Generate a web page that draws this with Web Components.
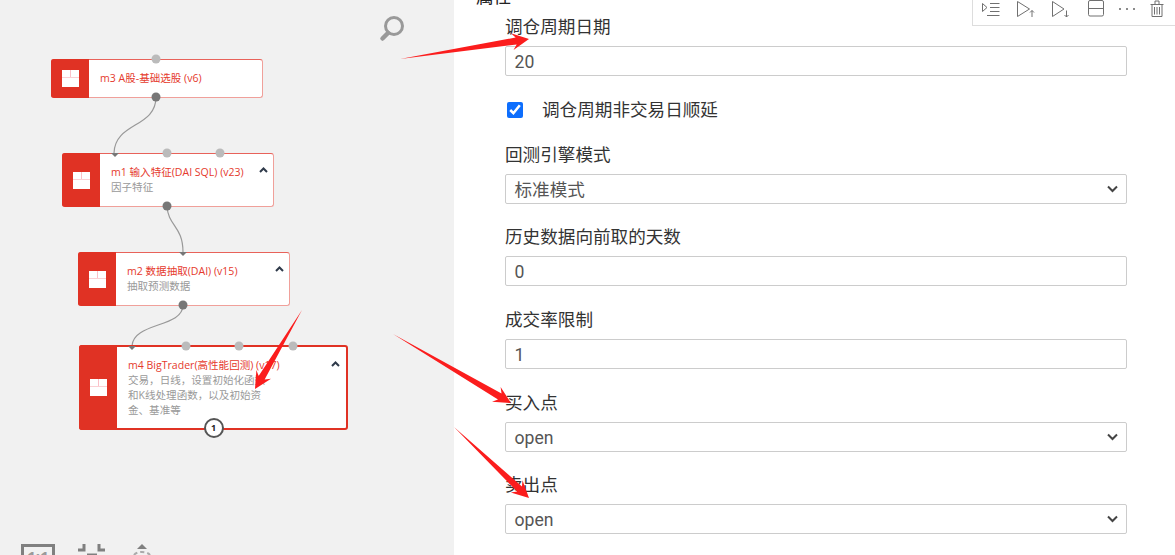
<!DOCTYPE html>
<html lang="zh">
<head>
<meta charset="utf-8">
<title>属性</title>
<style>
html, body { margin: 0; height: 100%; overflow: hidden; background: #fff; }
body { font-family: "Open Sans", "Noto Sans CJK SC", sans-serif; }
#page { display: grid; grid-template-columns: 454px 1fr; width: 1175px; height: 555px; overflow: hidden; position: relative; }
</style>
</head>
<body>
<div id="page">
  <flow-canvas>
    <flow-node style="left:51px;top:59px;width:212px;height:39px" name="m3 A股-基础选股 (v6)" ports="104" out="104"></flow-node>
    <flow-node style="left:62px;top:153px;width:212px;height:54px" name="m1 输入特征(DAI SQL) (v23)" desc="因子特征" ports="104,157" arrow="52" out="104" toggle></flow-node>
    <flow-node style="left:78px;top:252px;width:212px;height:54px" name="m2 数据抽取(DAI) (v15)" desc="抽取预测数据" arrow="104" out="104" toggle></flow-node>
    <flow-node style="left:79px;top:345px;width:269px;height:85px" name="m4 BigTrader(高性能回测) (v17)" desc="交易，日线，设置初始化函数和K线处理函数，以及初始资金、基准等" ports="105,158,212" arrow="51" badge="1" toggle selected></flow-node>
  </flow-canvas>
  <prop-panel>
    <h-title>属性</h-title>
    <form-field label="调仓周期日期"><text-box>20</text-box></form-field>
    <check-row>调仓周期非交易日顺延</check-row>
    <form-field label="回测引擎模式"><text-box select>标准模式</text-box></form-field>
    <form-field label="历史数据向前取的天数"><text-box>0</text-box></form-field>
    <form-field label="成交率限制"><text-box>1</text-box></form-field>
    <form-field label="买入点"><text-box select>open</text-box></form-field>
    <form-field label="卖出点"><text-box select>open</text-box></form-field>
  </prop-panel>
  <cell-toolbar></cell-toolbar>
  <red-arrows></red-arrows>
</div>

<script>
const canvasTemplate = document.createElement('template')
canvasTemplate.innerHTML = `
<style>
:host { display: block; position: relative; background: #f1f1f1; overflow: hidden; }
svg { position: absolute; left: 0; top: 0; }
#tools { position: absolute; left: 21px; top: 544px; display: flex; gap: 23px; align-items: flex-start; }
#one { width: 28px; height: 20px; border: 3px solid #808080; font: bold 15px/18px "Open Sans", sans-serif; color: #999; text-align: center; box-sizing: content-box; }
</style>
<svg width="454" height="555" fill="none">
  <path d="M156 97C156 128 115 122 114 153" stroke="#999" stroke-width="1.2"/>
  <path d="M167 206C168 226 183 226 183 252" stroke="#999" stroke-width="1.2"/>
  <path d="M183 305C183 328 133 322 132 346" stroke="#999" stroke-width="1.2"/>
  <circle cx="394" cy="26" r="8.5" stroke="#999" stroke-width="3"/>
  <path d="M388 33L382.5 38.5" stroke="#999" stroke-width="4.5" stroke-linecap="round"/>
</svg>
<slot></slot>
<div id="tools">
  <div id="one">1:1</div>
  <svg style="position:static" width="28" height="12" fill="none" stroke="#808080" stroke-width="3"><path d="M6 0V6H0M21 0V6H27"/><path d="M9 12H19" stroke-width="5"/></svg>
  <svg style="position:static;margin-left:2px" width="24" height="12" fill="none"><path d="M11 0L16 5H6Z" fill="#808080"/><path d="M3 11C6 7 16 7 19 11" stroke="#aaa" stroke-width="2" stroke-dasharray="4 3"/></svg>
</div>
`
class FlowCanvas extends HTMLElement {
  constructor () {
    super()
    this.attachShadow({ mode: 'open' })
    this.shadowRoot.appendChild(canvasTemplate.content.cloneNode(true))
  }
}
customElements.define('flow-canvas', FlowCanvas)

const nodeTemplate = document.createElement('template')
nodeTemplate.innerHTML = `
<style>
:host { position: absolute; display: flex; box-sizing: border-box; background: #fff; border: 1px solid #e8625a; border-bottom-color: #f0a09a; border-right-color: #f0a09a; border-radius: 3px; font-family: "Open Sans", "Noto Sans CJK SC", sans-serif; font-size: 10.56px; line-height: 15px; }
:host([selected]) { border: 2px solid #e03224; }
#side { flex: none; width: 38px; margin: -1px 0 -1px -1px; background: #e03224; border-radius: 3px 0 0 3px; display: flex; align-items: center; justify-content: center; }
:host([selected]) #side { margin: -2px 0 -2px -2px; }
#logo { width: 17px; height: 17px; background: #fff; position: relative; }
#logo::before { content: ""; position: absolute; left: 0; right: 0; top: 7px; height: 1px; background: #fbd0d4; }
#logo::after { content: ""; position: absolute; left: 8px; top: 0; height: 7px; width: 1px; background: #fbc0c8; }
#body { flex: 1; min-width: 0; padding: 0 11px; align-self: center; }
:host([selected]) #body { padding-right: 76px; }
#name { color: #e5392c; white-space: nowrap; }
#desc { color: #999; }
#desc:empty { display: none; }
#toggle { position: absolute; right: 5px; top: 13px; }
:host([selected]) #toggle { right: 6px; top: 14px; }
.port { position: absolute; width: 9px; height: 9px; border-radius: 50%; background: #bbb; transform: translate(-50%, -50%); top: -1px; }
.out { top: 100%; background: #777; }
.in { position: absolute; top: -1px; width: 0; height: 0; border: 4px solid transparent; border-top: 4px solid #777; border-bottom: 0; transform: translateX(-50%); }
#badge { position: absolute; left: 50%; bottom: -10px; margin-left: -10px; width: 20px; height: 20px; box-sizing: border-box; border: 2px solid #555; border-radius: 50%; background: #fff; color: #222; font: bold 9px/16px "Open Sans", sans-serif; text-align: center; }
</style>
<div id="side"><div id="logo"></div></div>
<div id="body"><div id="name"></div><div id="desc"></div></div>
`
class FlowNode extends HTMLElement {
  constructor () {
    super()
    this.attachShadow({ mode: 'open' })
    this.shadowRoot.appendChild(nodeTemplate.content.cloneNode(true))
  }

  /**
   * Builds the texts, ports and toggle from the attributes
   */
  connectedCallback () {
    const root = this.shadowRoot
    root.querySelector('#name').textContent = this.getAttribute('name')
    root.querySelector('#desc').textContent = this.getAttribute('desc') || ''
    const add = (className, left) => {
      const el = document.createElement('div')
      el.className = className
      el.style.left = left + 'px'
      root.appendChild(el)
    }
    const ports = this.getAttribute('ports')
    if (ports) ports.split(',').forEach((p) => add('port', p))
    if (this.hasAttribute('arrow')) add('in', this.getAttribute('arrow'))
    if (this.hasAttribute('out')) add('port out', this.getAttribute('out'))
    if (this.hasAttribute('toggle')) {
      const t = document.createElement('div')
      t.id = 'toggle'
      t.innerHTML = '<svg width="9" height="6" fill="none" stroke="#2f3a4a" stroke-width="2" style="display:block"><path d="M1 5L4.5 1.5L8 5"/></svg>'
      root.appendChild(t)
    }
    if (this.hasAttribute('badge')) {
      const b = document.createElement('div')
      b.id = 'badge'
      b.textContent = this.getAttribute('badge')
      root.appendChild(b)
    }
  }
}
customElements.define('flow-node', FlowNode)

class PropPanel extends HTMLElement {
  constructor () {
    super()
    this.attachShadow({ mode: 'open' }).innerHTML = `
<style>
:host { display: block; background: #fff; padding: 0 48px 0 51px; font: 17.6px/24px Roboto, "Noto Sans CJK SC", sans-serif; color: #333; }
</style>
<slot></slot>`
  }
}
customElements.define('prop-panel', PropPanel)

class HTitle extends HTMLElement {
  constructor () {
    super()
    this.attachShadow({ mode: 'open' }).innerHTML = `
<style>
:host { display: block; height: 24px; margin: -15px 0 6px -29px; color: #222; }
</style>
<slot></slot>`
  }
}
customElements.define('h-title', HTitle)

class FormField extends HTMLElement {
  constructor () {
    super()
    this.attachShadow({ mode: 'open' }).innerHTML = `
<style>
:host { display: block; margin-bottom: 21.67px; }
#label { height: 24px; margin-bottom: 7px; color: #333; }
</style>
<div id="label"></div>
<slot></slot>`
  }

  connectedCallback () {
    this.shadowRoot.querySelector('#label').textContent = this.getAttribute('label')
  }
}
customElements.define('form-field', FormField)

class TextBox extends HTMLElement {
  constructor () {
    super()
    this.attachShadow({ mode: 'open' }).innerHTML = `
<style>
:host { display: flex; align-items: center; justify-content: space-between; box-sizing: border-box; height: 30px; padding: 0 8px 0 8.5px; background: #fff; border: 1px solid #ccc; border-radius: 2px; color: #555; line-height: 28px; }
span { position: relative; top: 1px; }
svg { display: none; }
:host([select]) svg { display: block; }
</style>
<span><slot></slot></span>
<svg width="11" height="8" fill="none" stroke="#444" stroke-width="2"><path d="M1 1.5L5.5 6L10 1.5"/></svg>`
  }
}
customElements.define('text-box', TextBox)

class CheckRow extends HTMLElement {
  constructor () {
    super()
    this.attachShadow({ mode: 'open' }).innerHTML = `
<style>
:host { display: flex; align-items: center; height: 24px; margin-bottom: 21px; color: #333; }
input { width: 16px; height: 16px; margin: 0 19px 0 2px; accent-color: #0d6efd; }
</style>
<input type="checkbox" checked>
<span><slot></slot></span>`
  }
}
customElements.define('check-row', CheckRow)

class CellToolbar extends HTMLElement {
  constructor () {
    super()
    this.attachShadow({ mode: 'open' }).innerHTML = `
<style>
:host { position: absolute; left: 972px; top: -1px; width: 203px; height: 27px; box-sizing: border-box; background: #fff; border: 1px solid #ddd; border-right: 0; }
svg { display: block; }
</style>
<svg width="202" height="25" fill="none" stroke="#707070" stroke-width="1">
  <path d="M9.5 3.5L14 7.5L9.5 11.5Z"/>
  <path d="M17 3.5H26.5M17 7.5H26.5M17 11.5H26.5M14 15.5H26.5"/>
  <path d="M44.5 1.5L56.5 9L44.5 16.5Z"/>
  <path d="M59 17V10.5M57 12.5L59 10.5L61 12.5"/>
  <path d="M79.5 1.5L91 9L79.5 16.5Z"/>
  <path d="M93.5 10.5V17M91.5 15L93.5 17L95.5 15"/>
  <rect x="115.5" y="0.5" width="15" height="15.5" rx="1.5"/>
  <path d="M115.5 8.5H130.5"/>
  <path d="M146 9H148M153 9H155M160 9H162" stroke="#666" stroke-width="1.5"/>
  <path d="M177.5 4.5H190.5M179 4.5V16.5H189V4.5M182 4V1H186V4M181.5 7V14.5M184 7V14.5M186.5 7V14.5"/>
</svg>`
  }
}
customElements.define('cell-toolbar', CellToolbar)

class RedArrows extends HTMLElement {
  constructor () {
    super()
    this.attachShadow({ mode: 'open' }).innerHTML = `
<style>
:host { position: absolute; left: 0; top: 0; pointer-events: none; }
svg { display: block; }
</style>
<svg width="1175" height="555"></svg>`
  }

  /**
   * Draws one tapered arrow from its tail point to its tip
   *
   * @param {number[]} a tail x, tail y, tip x, tip y
   * @returns {string}
   */
  arrowPoints ([x1, y1, x2, y2]) {
    const len = Math.hypot(x2 - x1, y2 - y1)
    const ux = (x2 - x1) / len
    const uy = (y2 - y1) / len
    const at = (back, side) => `${x2 - ux * back - uy * side},${y2 - uy * back + ux * side}`
    return [`${x1},${y1}`, at(13, 3.5), at(17, 8.5), `${x2},${y2}`, at(17, -8.5), at(13, -3.5)].join(' ')
  }

  connectedCallback () {
    const svg = this.shadowRoot.querySelector('svg')
    const arrows = [[400, 59, 529, 39], [302, 310, 255, 389], [393, 334, 511, 403], [454, 427, 529, 498]]
    arrows.forEach((a) => {
      const p = document.createElementNS('http://www.w3.org/2000/svg', 'polygon')
      p.setAttribute('points', this.arrowPoints(a))
      p.setAttribute('fill', '#fb1d1d')
      svg.appendChild(p)
    })
  }
}
customElements.define('red-arrows', RedArrows)
</script>
</body>
</html>
